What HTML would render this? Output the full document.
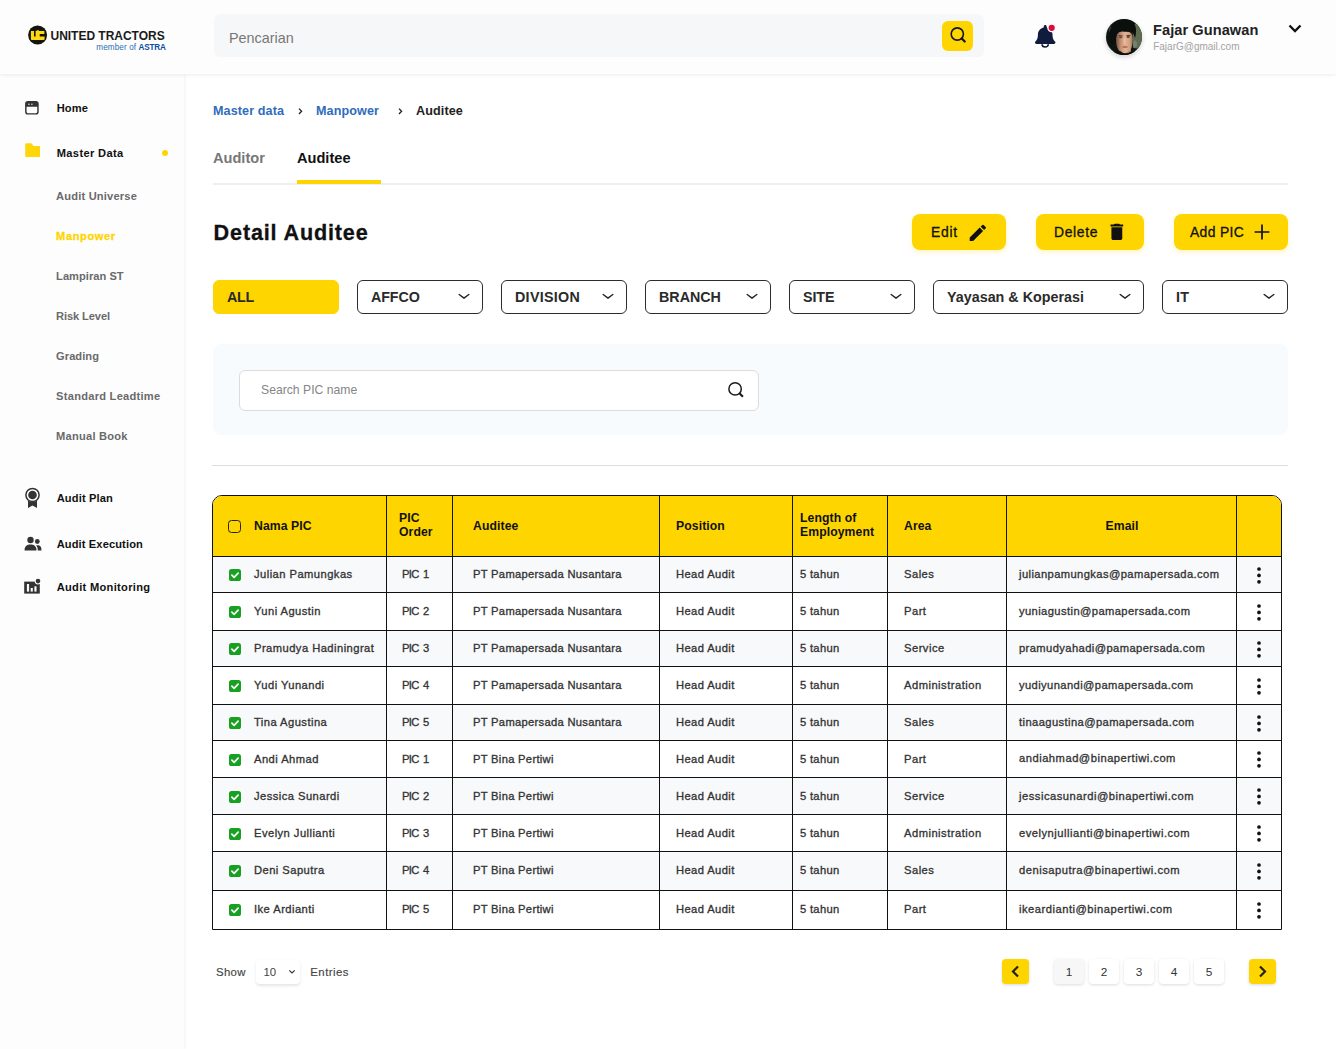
<!DOCTYPE html>
<html lang="id">
<head>
<meta charset="utf-8">
<title>Detail Auditee</title>
<style>
*{box-sizing:border-box;margin:0;padding:0}
html,body{width:1336px;height:1049px;overflow:hidden;background:#fff}
body{font-family:"Liberation Sans",sans-serif;color:#111;position:relative}
i{font-style:normal;display:block}
.abs{position:absolute;white-space:nowrap}
#header{position:absolute;left:0;top:0;width:1336px;height:74px;background:#fdfdfd;box-shadow:0 1px 4px rgba(0,0,0,.08);z-index:3}
#sidebar{position:absolute;left:0;top:74px;width:184px;height:975px;background:#fdfdfd;box-shadow:1px 0 3px rgba(0,0,0,.06);z-index:2}
#search{position:absolute;left:213.5px;top:14px;width:770.5px;height:43px;background:#f6f7f9;border-radius:6px}
#search span{position:absolute;left:15.5px;top:16.3px;font-size:14.4px;color:#777;line-height:17px}
#sbtn{position:absolute;left:942px;top:21px;width:31px;height:30px;background:#ffd500;border-radius:6px}
#sbtn svg{position:absolute;left:0;top:0}
#logo{position:absolute;left:28px;top:25px}
#ut{position:absolute;left:50.5px;top:29px;font-size:12px;font-weight:700;color:#1a1a1a;line-height:14px;white-space:nowrap;letter-spacing:-.02px}
#astra{position:absolute;left:96.3px;top:43px;font-size:8.15px;color:#2c6db5;line-height:10px;white-space:nowrap;letter-spacing:.12px}
#astra b{color:#0d4da1;letter-spacing:-.2px}
#uname{position:absolute;left:1153px;top:20.8px;font-size:14.6px;font-weight:700;color:#222;line-height:18px;white-space:nowrap;letter-spacing:.06px}
#umail{position:absolute;left:1153.2px;top:40.6px;font-size:10px;color:#a3a3a3;line-height:12px;white-space:nowrap;letter-spacing:0}
#avatar{position:absolute;left:1106px;top:19px;width:36px;height:36px;border-radius:50%;box-shadow:0 2px 5px rgba(0,0,0,.18);overflow:hidden}
.nav{position:absolute;left:56.700px;font-weight:700;font-size:11.1px;color:#111;line-height:14px;white-space:nowrap}
.sub{position:absolute;left:56.100px;font-weight:700;font-size:11.1px;color:#6a6a6a;line-height:14px;white-space:nowrap}
.ico{position:absolute}
.bc{position:absolute;top:103px;font-size:12.6px;font-weight:700;line-height:16px;color:#2f6cbd;white-space:nowrap;letter-spacing:.1px}
.tab{position:absolute;top:149.1px;font-size:14.6px;font-weight:700;line-height:18px;white-space:nowrap}
#title{position:absolute;left:213.6px;top:218.9px;font-size:21.6px;font-weight:700;line-height:28px;color:#111;white-space:nowrap;letter-spacing:.84px;-webkit-text-stroke:.3px #111}
.btn{position:absolute;top:214px;height:36px;background:#ffd500;border-radius:8px;box-shadow:0 2px 5px rgba(255,213,0,.25);font-size:13.9px;color:#111;line-height:36.4px;white-space:nowrap;-webkit-text-stroke:.3px #111;letter-spacing:.35px}
.btn span{position:absolute;top:0}
.btn svg{position:absolute}
.flt{position:absolute;top:280px;height:34px;border:1px solid #2c2c2c;border-radius:6px;font-size:14.3px;font-weight:700;color:#2a2a2a;line-height:32px;padding-left:13px;white-space:nowrap;letter-spacing:.3px;background:#fff}
.flt svg{position:absolute;right:12.500px;top:12px}
#panel{position:absolute;left:213px;top:344px;width:1075px;height:91px;background:#f8fbfd;border-radius:8px}
#pinput{position:absolute;left:26px;top:25.5px;width:520px;height:41px;background:#fff;border:1px solid #dcdcdc;border-radius:6px}
#pinput span{position:absolute;left:21px;top:12.6px;font-size:12.2px;color:#858585;line-height:14px}
#pinput svg{position:absolute;left:486px;top:9.5px}
#tbl{position:absolute;left:212px;top:495px;width:1070px;height:435px;border:1px solid #111;border-radius:10px 10px 0 0;overflow:hidden;background:#fff}
.row{position:absolute;left:-1px;width:1070px;border-top:1px solid #111}
.row.alt{background:#f8f9fb;box-shadow:inset 0 -1px 0 #fff}
.row.hd{background:#ffd500;border-top:none;left:-1px;top:-1px}
.c{position:absolute;top:0;bottom:0;width:1px;background:#111}
.t{position:absolute;white-space:nowrap;font-size:11.2px;color:#333;line-height:15px;-webkit-text-stroke:.32px #333;letter-spacing:.37px}
.c1{letter-spacing:.45px}.c2{letter-spacing:-.6px;word-spacing:1.6px}.c3{letter-spacing:.3px}.c4{letter-spacing:.4px}.c5{letter-spacing:.31px}.c6{letter-spacing:.48px}.c7{letter-spacing:.4px}
.h{position:absolute;white-space:nowrap;font-size:12.2px;font-weight:700;color:#111;line-height:14px;letter-spacing:.1px}
.hcb{position:absolute;left:16.2px;top:24px;width:13px;height:13px;border:1.3px solid #222;border-radius:3.5px}
.cb{position:absolute;left:17px}
.dots{position:absolute;left:1044.800px;fill:#111}
.pg{position:absolute;top:959px;width:30px;height:25px;background:#fff;border-radius:4px;box-shadow:0 1px 3px rgba(0,0,0,.14);font-size:11.8px;line-height:27px;text-align:center;color:#333}
.pgy{position:absolute;top:959px;width:27px;height:25px;background:#ffd500;border-radius:4px;box-shadow:0 1px 3px rgba(0,0,0,.15)}
.pgy svg{position:absolute;left:8px;top:6px}
.ft{position:absolute;top:965px;font-size:11.4px;color:#444;line-height:14px;white-space:nowrap;letter-spacing:.3px;-webkit-text-stroke:.15px #444}
</style>
</head>
<body>
<!-- MAIN CONTENT -->
<span class="bc" style="left:213px">Master data</span>
<svg class="ico" style="left:296px;top:106px" width="8" height="10" viewBox="0 0 8 10"><path d="M3 2.600 L5.600 5.300 L3 8" fill="none" stroke="#222" stroke-width="1.300"/></svg>
<span class="bc" style="left:316px">Manpower</span>
<svg class="ico" style="left:396px;top:106px" width="8" height="10" viewBox="0 0 8 10"><path d="M3 2.600 L5.600 5.300 L3 8" fill="none" stroke="#222" stroke-width="1.300"/></svg>
<span class="bc" style="left:416px;color:#222">Auditee</span>
<span class="tab" style="left:213px;color:#777">Auditor</span>
<span class="tab" style="left:297px;color:#111">Auditee</span>
<i class="abs" style="left:213px;top:183px;width:1075px;height:1.5px;background:#eee"></i>
<i class="abs" style="left:297px;top:180px;width:84px;height:4px;background:#ffd500"></i>
<span id="title">Detail Auditee</span>
<div class="btn" style="left:912px;width:94px"><span style="left:19px;letter-spacing:.7px">Edit</span><svg style="left:55px;top:7.600px" width="21.700" height="21.700" viewBox="0 0 24 24"><path d="M3 17.25V21h3.75L17.81 9.94l-3.75-3.75L3 17.25zM20.71 7.04a1 1 0 0 0 0-1.41l-2.34-2.34a1 1 0 0 0-1.41 0l-1.83 1.83 3.75 3.75 1.83-1.83z" fill="#111"/></svg></div>
<div class="btn" style="left:1036px;width:108px"><span style="left:18px;letter-spacing:.65px">Delete</span><svg style="left:69.700px;top:7px" width="21.700" height="21.700" viewBox="0 0 24 24"><path d="M6 19c0 1.1.9 2 2 2h8c1.1 0 2-.9 2-2V7H6v12zM19 4h-3.500l-1-1h-5l-1 1H5v2h14V4z" fill="#111"/></svg></div>
<div class="btn" style="left:1174px;width:114px"><span style="left:16px">Add PIC</span><svg style="left:80px;top:10px" width="16" height="16" viewBox="0 0 16 16"><path d="M8 .6v14.800M.6 8h14.800" stroke="#111" stroke-width="1.700" fill="none"/></svg></div>
<div class="flt" style="left:213px;width:126px;background:#ffd500;border-color:#ffd500;letter-spacing:-.25px">ALL</div>
<div class="flt" style="left:357px;width:126px;letter-spacing:-.1px">AFFCO<svg width="12" height="7" viewBox="0 0 12 7"><path d="M1.200 1.500 L6 5.100 L10.800 1.500" fill="none" stroke="#222" stroke-width="1.400" stroke-linecap="round" stroke-linejoin="round"/></svg></div>
<div class="flt" style="left:501px;width:126px">DIVISION<svg width="12" height="7" viewBox="0 0 12 7"><path d="M1.200 1.500 L6 5.100 L10.800 1.500" fill="none" stroke="#222" stroke-width="1.400" stroke-linecap="round" stroke-linejoin="round"/></svg></div>
<div class="flt" style="left:645px;width:126px;letter-spacing:0">BRANCH<svg width="12" height="7" viewBox="0 0 12 7"><path d="M1.200 1.500 L6 5.100 L10.800 1.500" fill="none" stroke="#222" stroke-width="1.400" stroke-linecap="round" stroke-linejoin="round"/></svg></div>
<div class="flt" style="left:789px;width:126px;letter-spacing:-.07px">SITE<svg width="12" height="7" viewBox="0 0 12 7"><path d="M1.200 1.500 L6 5.100 L10.800 1.500" fill="none" stroke="#222" stroke-width="1.400" stroke-linecap="round" stroke-linejoin="round"/></svg></div>
<div class="flt" style="left:933px;width:211px;letter-spacing:.02px">Yayasan &amp; Koperasi<svg width="12" height="7" viewBox="0 0 12 7"><path d="M1.200 1.500 L6 5.100 L10.800 1.500" fill="none" stroke="#222" stroke-width="1.400" stroke-linecap="round" stroke-linejoin="round"/></svg></div>
<div class="flt" style="left:1162px;width:126px">IT<svg width="12" height="7" viewBox="0 0 12 7"><path d="M1.200 1.500 L6 5.100 L10.800 1.500" fill="none" stroke="#222" stroke-width="1.400" stroke-linecap="round" stroke-linejoin="round"/></svg></div>
<div id="panel"><div id="pinput"><span>Search PIC name</span><svg width="20" height="20" viewBox="0 0 20 20"><circle cx="9.100" cy="8.900" r="6.200" fill="none" stroke="#1c1c1c" stroke-width="1.500"/><path d="M13.400 13.200 L16.900 16.700" stroke="#1c1c1c" stroke-width="2.200"/></svg></div></div>
<i class="abs" style="left:212px;top:465px;width:1076px;height:1px;background:#dedede"></i>
<!-- HEADER -->
<div id="header">
  <svg id="logo" width="20" height="20" viewBox="0 0 20 20"><circle cx="9.600" cy="10" r="9.500" fill="#15150f"/><path d="M2.900 6 H6 V11.400 H7.600 V6 H8.600 V5.200 H10.900 V6 H16.400 V9 H11.700 V11.500 H16.600 V14 Q16.600 15 15.600 15 H3.900 Q2.900 15 2.900 14z" fill="#ffd90f"/></svg>
  <span id="ut">UNITED TRACTORS</span>
  <span id="astra">member of <b>ASTRA</b></span>
  <div id="search"><span>Pencarian</span></div>
  <div id="sbtn"><svg width="31" height="30" viewBox="0 0 31 30"><circle cx="15.300" cy="13" r="6.100" fill="none" stroke="#14142a" stroke-width="1.600"/><path d="M19.800 17.500 L22.700 20.500" stroke="#14142a" stroke-width="2.300" stroke-linecap="round"/></svg></div>
  <svg class="ico" style="left:1034px;top:24px" width="24" height="25" viewBox="0 0 24 25"><path transform="translate(1 1) scale(.0456)" d="M439.390 362.290c-19.320-20.760-55.470-51.990-55.470-154.290 0-77.700-54.480-139.900-127.940-155.160V32c0-17.670-14.320-32-31.980-32s-31.980 14.330-31.980 32v20.840C118.560 68.100 64.080 130.300 64.080 208c0 102.300-36.150 133.530-55.470 154.290-6 6.450-8.660 14.160-8.610 21.710.11 16.400 12.980 32 32.100 32h383.800c19.120 0 32-15.600 32.100-32 .05-7.550-2.610-15.270-8.610-21.710z" fill="#101c3d"/><path d="M8.100 20.300 a3.100 2.700 0 0 0 6.200 0" fill="none" stroke="#101c3d" stroke-width="1.700"/><circle cx="17.700" cy="3.800" r="4.500" fill="#fdfdfd"/><circle cx="17.700" cy="3.800" r="3.100" fill="#e0093f"/></svg>
  <div id="avatar"><svg width="36" height="36" viewBox="0 0 36 36"><defs><linearGradient id="fg" x1="0" y1="0" x2="1" y2="0"><stop offset="0" stop-color="#6e5040"/><stop offset=".3" stop-color="#c99474"/><stop offset=".55" stop-color="#e3b393"/><stop offset=".8" stop-color="#d3a080"/><stop offset="1" stop-color="#9c745c"/></linearGradient></defs><rect width="36" height="36" fill="#0e1411"/><path d="M26.500 5 L36 5 L36 30 L27 29z" fill="#5f6b50"/><ellipse cx="29" cy="25" rx="2" ry="3.500" fill="#73826c"/><ellipse cx="4.500" cy="10.500" rx="1.800" ry="3" fill="#2f3d33"/><rect x="14.500" y="29" width="10.500" height="5.500" fill="#a87a5e"/><path d="M10 20 C10 14 13 12 18 12 C23.500 12 26.800 14 26.800 20 C26.800 29 24 34 18.500 34 C13 34 10 29 10 20z" fill="url(#fg)"/><path d="M4 23 C1 9 9 0 19 .5 C29 0 32 9 29 19 C28 15.500 27 14 26 13 C23 11.500 20 13.500 17 12.500 C14 12 12 13.500 11 15 C10 17 10 20 9.500 24 C8 26 6 26 4 23z" fill="#0b0f0d"/><path d="M12.800 16.700 L16.600 16.900 M20.300 16.700 L24.300 16.400" stroke="#2a1e18" stroke-width=".8" fill="none"/><ellipse cx="14.700" cy="18.300" rx="1.700" ry=".9" fill="#4a4f4c"/><ellipse cx="22.200" cy="18" rx="1.700" ry=".9" fill="#4a4f4c"/><rect x="17.700" y="18.700" width="1.500" height="6.500" rx=".7" fill="#efc3a3" opacity=".8"/><ellipse cx="19" cy="28" rx="2.800" ry=".9" fill="#b36e63"/><path d="M3 36 C8 31 13 32 15 32.500 C17 35 22 35 25 32.500 C28 32 31 32 34 36z" fill="#0c100e"/></svg></div>
  <span id="uname">Fajar Gunawan</span>
  <span id="umail">FajarG@gmail.com</span>
  <svg class="ico" style="left:1286.600px;top:23.400px" width="16" height="11" viewBox="0 0 16 11"><path d="M2.500 2.500 L8 8 L13.500 2.500" fill="none" stroke="#111" stroke-width="2.300"/></svg>
</div>
<!-- SIDEBAR -->
<div id="sidebar">
  <svg class="ico" style="left:25px;top:27.200px" width="13.800" height="13.600" viewBox="0 0 14 14"><rect x=".75" y=".75" width="12.500" height="12.500" rx="2.200" fill="none" stroke="#333" stroke-width="1.500"/><path d="M.75 3 a2.200 2.200 0 0 1 2.200-2.200 h8.100 a2.200 2.200 0 0 1 2.200 2.200 v3 H.75z" fill="#333"/><circle cx="3.900" cy="3.300" r=".8" fill="#ddd"/><circle cx="7" cy="3.300" r=".8" fill="#ddd"/></svg>
  <span class="nav" style="top:27px;letter-spacing:0.12px">Home</span>
  <svg class="ico" style="left:24.800px;top:68.800px" width="15.600" height="14.400" viewBox="0 0 15.600 14.400"><path d="M.2 1.600 a1.400 1.400 0 0 1 1.400-1.400 h4.300 q.8 0 1.300.8 l1.100 1.900 h5.800 a1.300 1.300 0 0 1 1.300 1.300 v8.600 a1.300 1.300 0 0 1-1.300 1.300 h-12.500 a1.400 1.400 0 0 1-1.400-1.400z" fill="#ffd60a"/></svg>
  <span class="nav" style="top:72px;letter-spacing:0.37px">Master Data</span>
  <i class="abs" style="left:162px;top:76px;width:6px;height:6px;border-radius:50%;background:#ffd500"></i>
  <span class="sub" style="top:115px;letter-spacing:0.19px">Audit Universe</span>
  <span class="sub" style="top:155px;color:#ffd500;letter-spacing:0.6px;-webkit-text-stroke:.3px #ffd500">Manpower</span>
  <span class="sub" style="top:195px;letter-spacing:0.03px">Lampiran ST</span>
  <span class="sub" style="top:235px;letter-spacing:-0.1px">Risk Level</span>
  <span class="sub" style="top:275px;letter-spacing:0.05px">Grading</span>
  <span class="sub" style="top:315px;letter-spacing:0.26px">Standard Leadtime</span>
  <span class="sub" style="top:355px;letter-spacing:0.23px">Manual Book</span>
  <svg class="ico" style="left:24px;top:413px" width="17" height="22" viewBox="0 0 17 22"><circle cx="8.500" cy="8" r="6.600" fill="none" stroke="#333" stroke-width="1.500"/><circle cx="8.500" cy="8" r="4.300" fill="#333"/><path d="M4 13.500 V21 L8.500 18.500 L13 21 V13.500 Q8.500 16.500 4 13.500z" fill="#333"/></svg>
  <span class="nav" style="top:417px;letter-spacing:0.14px">Audit Plan</span>
  <svg class="ico" style="left:24px;top:462px" width="18" height="15" viewBox="0 0 18 15"><circle cx="6.500" cy="4" r="3.200" fill="#333"/><path d="M0.500 14.500 C0.500 9.500 3.500 8.500 6.500 8.500 C9.500 8.500 12.500 9.500 12.500 14.500z" fill="#333"/><circle cx="13.300" cy="5.500" r="2.400" fill="#333"/><path d="M13.200 9.300 C16 9.300 17.500 10.500 17.500 14.500 H13.800 C13.800 12 13.200 10.500 12 9.500z" fill="#333"/></svg>
  <span class="nav" style="top:463px;letter-spacing:0.12px">Audit Execution</span>
  <svg class="ico" style="left:23px;top:503px" width="18" height="17" viewBox="0 0 18 17"><path d="M1.200 4.600 H16.800 V16.600 H1.200z" fill="#333"/><rect x="3.900" y="7" width="2.200" height="7.600" fill="#fdfdfd"/><rect x="7.700" y="11" width="2.100" height="3.600" fill="#fdfdfd"/><rect x="11.400" y="9.300" width="2.100" height="5.300" fill="#fdfdfd"/><circle cx="15" cy="4.100" r="3.400" fill="#fdfdfd"/><circle cx="15" cy="4.100" r="2.300" fill="#333"/></svg>
  <span class="nav" style="top:506px;letter-spacing:0.31px">Audit Monitoring</span>
</div>
<div id="tbl">
<div class="row hd" style="top:0;height:61px">
<i class="hcb"></i>
<span class="h" style="left:42px;top:23px">Nama PIC</span>
<span class="h" style="left:187px;top:15px">PIC<br>Order</span>
<span class="h" style="left:261px;top:23px">Auditee</span>
<span class="h" style="left:464px;top:23px">Position</span>
<span class="h" style="left:588px;top:15px">Length of<br>Employment</span>
<span class="h" style="left:692px;top:23px">Area</span>
<span class="h" style="left:893.5px;top:23px">Email</span>
</div>
<div class="row alt" style="top:60px;height:37px">
<svg class="cb" style="top:11.8px" width="12" height="12" viewBox="0 0 12 12"><rect width="12" height="12" rx="2.6" fill="#17a021"/><path d="M2.9 6.1 L5.1 8.3 L9.1 4.1" fill="none" stroke="#fff" stroke-width="1.7" stroke-linecap="round" stroke-linejoin="round"/></svg>
<span class="t c1" style="left:42px;top:10.1px">Julian Pamungkas</span>
<span class="t c2" style="left:190px;top:10.1px">PIC 1</span>
<span class="t c3" style="left:261px;top:10.1px">PT Pamapersada Nusantara</span>
<span class="t c4" style="left:464px;top:10.1px">Head Audit</span>
<span class="t c5" style="left:588px;top:10.1px">5 tahun</span>
<span class="t c6" style="left:692px;top:10.1px">Sales</span>
<span class="t c7" style="left:807px;top:10.1px">julianpamungkas@pamapersada.com</span>
<svg class="dots" style="top:9.5px" width="4" height="17" viewBox="0 0 4 17"><circle cx="2" cy="2" r="1.850"/><circle cx="2" cy="8.400" r="1.850"/><circle cx="2" cy="14.800" r="1.850"/></svg>
</div>
<div class="row" style="top:96px;height:39px">
<svg class="cb" style="top:12.8px" width="12" height="12" viewBox="0 0 12 12"><rect width="12" height="12" rx="2.6" fill="#17a021"/><path d="M2.9 6.1 L5.1 8.3 L9.1 4.1" fill="none" stroke="#fff" stroke-width="1.7" stroke-linecap="round" stroke-linejoin="round"/></svg>
<span class="t c1" style="left:42px;top:11.1px">Yuni Agustin</span>
<span class="t c2" style="left:190px;top:11.1px">PIC 2</span>
<span class="t c3" style="left:261px;top:11.1px">PT Pamapersada Nusantara</span>
<span class="t c4" style="left:464px;top:11.1px">Head Audit</span>
<span class="t c5" style="left:588px;top:11.1px">5 tahun</span>
<span class="t c6" style="left:692px;top:11.1px">Part</span>
<span class="t c7" style="left:807px;top:11.1px">yuniagustin@pamapersada.com</span>
<svg class="dots" style="top:10.5px" width="4" height="17" viewBox="0 0 4 17"><circle cx="2" cy="2" r="1.850"/><circle cx="2" cy="8.400" r="1.850"/><circle cx="2" cy="14.800" r="1.850"/></svg>
</div>
<div class="row alt" style="top:134px;height:37px">
<svg class="cb" style="top:11.8px" width="12" height="12" viewBox="0 0 12 12"><rect width="12" height="12" rx="2.6" fill="#17a021"/><path d="M2.9 6.1 L5.1 8.3 L9.1 4.1" fill="none" stroke="#fff" stroke-width="1.7" stroke-linecap="round" stroke-linejoin="round"/></svg>
<span class="t c1" style="left:42px;top:10.1px">Pramudya Hadiningrat</span>
<span class="t c2" style="left:190px;top:10.1px">PIC 3</span>
<span class="t c3" style="left:261px;top:10.1px">PT Pamapersada Nusantara</span>
<span class="t c4" style="left:464px;top:10.1px">Head Audit</span>
<span class="t c5" style="left:588px;top:10.1px">5 tahun</span>
<span class="t c6" style="left:692px;top:10.1px">Service</span>
<span class="t c7" style="left:807px;top:10.1px">pramudyahadi@pamapersada.com</span>
<svg class="dots" style="top:9.5px" width="4" height="17" viewBox="0 0 4 17"><circle cx="2" cy="2" r="1.850"/><circle cx="2" cy="8.400" r="1.850"/><circle cx="2" cy="14.800" r="1.850"/></svg>
</div>
<div class="row" style="top:170px;height:39px">
<svg class="cb" style="top:12.8px" width="12" height="12" viewBox="0 0 12 12"><rect width="12" height="12" rx="2.6" fill="#17a021"/><path d="M2.9 6.1 L5.1 8.3 L9.1 4.1" fill="none" stroke="#fff" stroke-width="1.7" stroke-linecap="round" stroke-linejoin="round"/></svg>
<span class="t c1" style="left:42px;top:11.1px">Yudi Yunandi</span>
<span class="t c2" style="left:190px;top:11.1px">PIC 4</span>
<span class="t c3" style="left:261px;top:11.1px">PT Pamapersada Nusantara</span>
<span class="t c4" style="left:464px;top:11.1px">Head Audit</span>
<span class="t c5" style="left:588px;top:11.1px">5 tahun</span>
<span class="t c6" style="left:692px;top:11.1px">Administration</span>
<span class="t c7" style="left:807px;top:11.1px">yudiyunandi@pamapersada.com</span>
<svg class="dots" style="top:10.5px" width="4" height="17" viewBox="0 0 4 17"><circle cx="2" cy="2" r="1.850"/><circle cx="2" cy="8.400" r="1.850"/><circle cx="2" cy="14.800" r="1.850"/></svg>
</div>
<div class="row alt" style="top:208px;height:37px">
<svg class="cb" style="top:11.8px" width="12" height="12" viewBox="0 0 12 12"><rect width="12" height="12" rx="2.6" fill="#17a021"/><path d="M2.9 6.1 L5.1 8.3 L9.1 4.1" fill="none" stroke="#fff" stroke-width="1.7" stroke-linecap="round" stroke-linejoin="round"/></svg>
<span class="t c1" style="left:42px;top:10.1px">Tina Agustina</span>
<span class="t c2" style="left:190px;top:10.1px">PIC 5</span>
<span class="t c3" style="left:261px;top:10.1px">PT Pamapersada Nusantara</span>
<span class="t c4" style="left:464px;top:10.1px">Head Audit</span>
<span class="t c5" style="left:588px;top:10.1px">5 tahun</span>
<span class="t c6" style="left:692px;top:10.1px">Sales</span>
<span class="t c7" style="left:807px;top:10.1px">tinaagustina@pamapersada.com</span>
<svg class="dots" style="top:9.5px" width="4" height="17" viewBox="0 0 4 17"><circle cx="2" cy="2" r="1.850"/><circle cx="2" cy="8.400" r="1.850"/><circle cx="2" cy="14.800" r="1.850"/></svg>
</div>
<div class="row" style="top:244px;height:38px">
<svg class="cb" style="top:13px" width="12" height="12" viewBox="0 0 12 12"><rect width="12" height="12" rx="2.6" fill="#17a021"/><path d="M2.9 6.1 L5.1 8.3 L9.1 4.1" fill="none" stroke="#fff" stroke-width="1.7" stroke-linecap="round" stroke-linejoin="round"/></svg>
<span class="t c1" style="left:42px;top:11px">Andi Ahmad</span>
<span class="t c2" style="left:190px;top:11px">PIC 1</span>
<span class="t c3" style="left:261px;top:11px">PT Bina Pertiwi</span>
<span class="t c4" style="left:464px;top:11px">Head Audit</span>
<span class="t c5" style="left:588px;top:11px">5 tahun</span>
<span class="t c6" style="left:692px;top:11px">Part</span>
<span class="t c7" style="left:807px;top:10.2px;letter-spacing:.5px">andiahmad@binapertiwi.com</span>
<svg class="dots" style="top:10px" width="4" height="17" viewBox="0 0 4 17"><circle cx="2" cy="2" r="1.850"/><circle cx="2" cy="8.400" r="1.850"/><circle cx="2" cy="14.800" r="1.850"/></svg>
</div>
<div class="row alt" style="top:281px;height:38px">
<svg class="cb" style="top:13px" width="12" height="12" viewBox="0 0 12 12"><rect width="12" height="12" rx="2.6" fill="#17a021"/><path d="M2.9 6.1 L5.1 8.3 L9.1 4.1" fill="none" stroke="#fff" stroke-width="1.7" stroke-linecap="round" stroke-linejoin="round"/></svg>
<span class="t c1" style="left:42px;top:11px">Jessica Sunardi</span>
<span class="t c2" style="left:190px;top:11px">PIC 2</span>
<span class="t c3" style="left:261px;top:11px">PT Bina Pertiwi</span>
<span class="t c4" style="left:464px;top:11px">Head Audit</span>
<span class="t c5" style="left:588px;top:11px">5 tahun</span>
<span class="t c6" style="left:692px;top:11px">Service</span>
<span class="t c7" style="left:807px;top:11px;letter-spacing:.5px">jessicasunardi@binapertiwi.com</span>
<svg class="dots" style="top:10px" width="4" height="17" viewBox="0 0 4 17"><circle cx="2" cy="2" r="1.850"/><circle cx="2" cy="8.400" r="1.850"/><circle cx="2" cy="14.800" r="1.850"/></svg>
</div>
<div class="row" style="top:318px;height:38px">
<svg class="cb" style="top:13px" width="12" height="12" viewBox="0 0 12 12"><rect width="12" height="12" rx="2.6" fill="#17a021"/><path d="M2.9 6.1 L5.1 8.3 L9.1 4.1" fill="none" stroke="#fff" stroke-width="1.7" stroke-linecap="round" stroke-linejoin="round"/></svg>
<span class="t c1" style="left:42px;top:11px">Evelyn Jullianti</span>
<span class="t c2" style="left:190px;top:11px">PIC 3</span>
<span class="t c3" style="left:261px;top:11px">PT Bina Pertiwi</span>
<span class="t c4" style="left:464px;top:11px">Head Audit</span>
<span class="t c5" style="left:588px;top:11px">5 tahun</span>
<span class="t c6" style="left:692px;top:11px">Administration</span>
<span class="t c7" style="left:807px;top:11px;letter-spacing:.5px">evelynjullianti@binapertiwi.com</span>
<svg class="dots" style="top:10px" width="4" height="17" viewBox="0 0 4 17"><circle cx="2" cy="2" r="1.850"/><circle cx="2" cy="8.400" r="1.850"/><circle cx="2" cy="14.800" r="1.850"/></svg>
</div>
<div class="row alt" style="top:355px;height:40px">
<svg class="cb" style="top:13.3px" width="12" height="12" viewBox="0 0 12 12"><rect width="12" height="12" rx="2.6" fill="#17a021"/><path d="M2.9 6.1 L5.1 8.3 L9.1 4.1" fill="none" stroke="#fff" stroke-width="1.7" stroke-linecap="round" stroke-linejoin="round"/></svg>
<span class="t c1" style="left:42px;top:10.8px">Deni Saputra</span>
<span class="t c2" style="left:190px;top:10.8px">PIC 4</span>
<span class="t c3" style="left:261px;top:10.8px">PT Bina Pertiwi</span>
<span class="t c4" style="left:464px;top:10.8px">Head Audit</span>
<span class="t c5" style="left:588px;top:10.8px">5 tahun</span>
<span class="t c6" style="left:692px;top:10.8px">Sales</span>
<span class="t c7" style="left:807px;top:10.8px;letter-spacing:.5px">denisaputra@binapertiwi.com</span>
<svg class="dots" style="top:11px" width="4" height="17" viewBox="0 0 4 17"><circle cx="2" cy="2" r="1.850"/><circle cx="2" cy="8.400" r="1.850"/><circle cx="2" cy="14.800" r="1.850"/></svg>
</div>
<div class="row" style="top:394px;height:40px">
<svg class="cb" style="top:13.3px" width="12" height="12" viewBox="0 0 12 12"><rect width="12" height="12" rx="2.6" fill="#17a021"/><path d="M2.9 6.1 L5.1 8.3 L9.1 4.1" fill="none" stroke="#fff" stroke-width="1.7" stroke-linecap="round" stroke-linejoin="round"/></svg>
<span class="t c1" style="left:42px;top:10.8px">Ike Ardianti</span>
<span class="t c2" style="left:190px;top:10.8px">PIC 5</span>
<span class="t c3" style="left:261px;top:10.8px">PT Bina Pertiwi</span>
<span class="t c4" style="left:464px;top:10.8px">Head Audit</span>
<span class="t c5" style="left:588px;top:10.8px">5 tahun</span>
<span class="t c6" style="left:692px;top:10.8px">Part</span>
<span class="t c7" style="left:807px;top:10.8px;letter-spacing:.5px">ikeardianti@binapertiwi.com</span>
<svg class="dots" style="top:11px" width="4" height="17" viewBox="0 0 4 17"><circle cx="2" cy="2" r="1.850"/><circle cx="2" cy="8.400" r="1.850"/><circle cx="2" cy="14.800" r="1.850"/></svg>
</div>
<i class="c" style="left:173px"></i>
<i class="c" style="left:239px"></i>
<i class="c" style="left:446px"></i>
<i class="c" style="left:579px"></i>
<i class="c" style="left:674px"></i>
<i class="c" style="left:793px"></i>
<i class="c" style="left:1023px"></i>
</div>
<span class="ft" style="left:216px">Show</span>
<div class="abs" style="left:256px;top:960px;width:44px;height:24px;background:#fff;border-radius:4px;box-shadow:0 1.500px 3px rgba(0,0,0,.1)"><span class="abs" style="left:7.600px;top:5px;font-size:11.4px;color:#444;line-height:14px;letter-spacing:-.3px">10</span><svg class="ico" style="left:32px;top:9px" width="8" height="6" viewBox="0 0 8 6"><path d="M1.300 1.400 L4 4 L6.700 1.400" fill="none" stroke="#333" stroke-width="1.200"/></svg></div>
<span class="ft" style="left:310.300px;letter-spacing:.46px">Entries</span>
<div class="pgy" style="left:1002px"><svg width="11" height="13" viewBox="0 0 11 13"><path d="M8 1.500 L3 6.500 L8 11.500" fill="none" stroke="#222" stroke-width="2.200"/></svg></div>
<div class="pg" style="left:1054px;background:#f7f7f7">1</div>
<div class="pg" style="left:1089px">2</div>
<div class="pg" style="left:1124px">3</div>
<div class="pg" style="left:1159px">4</div>
<div class="pg" style="left:1194px">5</div>
<div class="pgy" style="left:1249px"><svg width="11" height="13" viewBox="0 0 11 13"><path d="M3 1.500 L8 6.500 L3 11.500" fill="none" stroke="#222" stroke-width="2.200"/></svg></div>
</body>
</html>
